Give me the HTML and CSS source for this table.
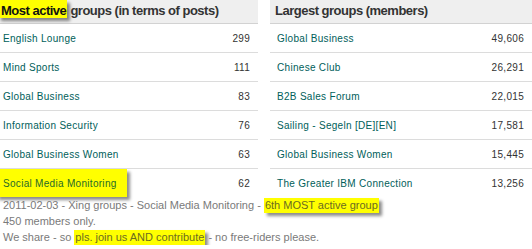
FILE: index.html
```html
<!DOCTYPE html>
<html>
<head>
<meta charset="utf-8">
<link rel="stylesheet" href="styles.css">
</head>
<body>
<div class="page">
  <div class="panels">
    <section class="panel">
      <h2 class="panel-title"><span class="hl hl-title">Most active</span> groups (in terms of posts)</h2>
      <ul class="rows">
        <li class="row"><span class="name">English Lounge</span><span class="num">299</span></li>
        <li class="row"><span class="name">Mind Sports</span><span class="num">111</span></li>
        <li class="row"><span class="name">Global Business</span><span class="num">83</span></li>
        <li class="row"><span class="name">Information Security</span><span class="num">76</span></li>
        <li class="row"><span class="name">Global Business Women</span><span class="num">63</span></li>
        <li class="row"><span class="name name-hl">Social Media Monitoring</span><span class="num">62</span></li>
      </ul>
    </section>
    <section class="panel">
      <h2 class="panel-title">Largest groups (members)</h2>
      <ul class="rows">
        <li class="row"><span class="name">Global Business</span><span class="num">49,606</span></li>
        <li class="row"><span class="name">Chinese Club</span><span class="num">26,291</span></li>
        <li class="row"><span class="name">B2B Sales Forum</span><span class="num">22,015</span></li>
        <li class="row"><span class="name">Sailing - Segeln [DE][EN]</span><span class="num">17,581</span></li>
        <li class="row"><span class="name">Global Business Women</span><span class="num">15,445</span></li>
        <li class="row"><span class="name">The Greater IBM Connection</span><span class="num">13,256</span></li>
      </ul>
    </section>
  </div>
  <p class="note">2011-02-03 - Xing groups - Social Media Monitoring - <span class="hl hl-text">6th MOST active group</span><br>450 members only.<br>We share - so <span class="hl hl-text">pls. join us AND contribute</span> - no free-riders please.</p>
</div>
</body>
</html>
```

FILE: styles.css
```css
html, body {
  margin: 0;
  padding: 0;
  background: #ffffff;
  overflow: hidden;
}

.page {
  width: 540px;
  margin-left: -4px;
  font-family: "Liberation Sans", Arial, sans-serif;
}

.panels {
  display: flex;
  gap: 12px;
}

.panel {
  width: 262px;
  flex: none;
}

.panel-title {
  margin: 0;
  height: 20px;
  padding: 3px 0 0 5px;
  background: #efefef;
  border-bottom: 1px solid #d2d2d2;
  font-size: 13px;
  line-height: 15px;
  font-weight: bold;
  letter-spacing: -0.5px;
  color: #333333;
  white-space: nowrap;
}

.hl {
  background: #ffff00;
  box-shadow: 3px 3px 3px rgba(0, 0, 0, 0.45);
}

.hl-title {
  padding: 3px 1px 0 3px;
  margin-left: -3px;
  color: #111111;
}

.rows {
  list-style: none;
  margin: 0;
  padding: 0;
}

.row {
  display: flex;
  justify-content: space-between;
  align-items: stretch;
  height: 28px;
  padding: 0 8px 0 7px;
  border-bottom: 1px solid #dcdcdc;
  font-size: 10px;
  letter-spacing: 0.3px;
}

.row:last-child {
  border-bottom: none;
}

.name {
  display: flex;
  align-items: center;
  color: #00605a;
}

.name-hl {
  margin-left: -7px;
  padding: 0 10px 0 7px;
  background: #ffff00;
  box-shadow: 3px 3px 3px rgba(0, 0, 0, 0.45);
  color: #1f6a2a;
}

.num {
  display: flex;
  align-items: center;
  color: #333333;
}

.note {
  margin: 0;
  padding-left: 7px;
  font-size: 11px;
  line-height: 16px;
  color: #7a7a7a;
}

.hl-text {
  padding: 1px 1px 2px 1px;
  color: #6b6b20;
}
```
